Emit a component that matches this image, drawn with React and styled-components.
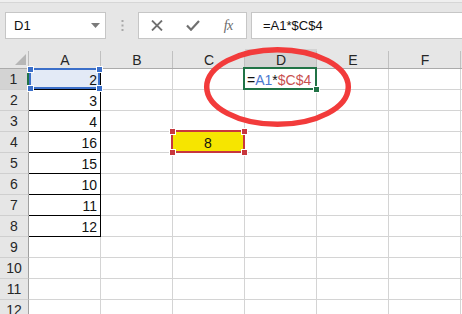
import React from "react";
import styled, { createGlobalStyle } from "styled-components";

const GlobalStyle = createGlobalStyle`
  html, body { margin: 0; padding: 0; background: #fff; }
  body { font-family: "Liberation Sans", Arial, sans-serif; }
`;

const Wrap = styled.div`
  position: relative;
  width: 462px;
  height: 314px;
  overflow: hidden;
  background: #fff;
`;

const FormulaBar = styled.div`
  display: flex;
  align-items: flex-start;
  height: 49px;
  box-sizing: border-box;
  padding: 12px 0 0 5px;
  background: linear-gradient(#efefef 0 2px, #d6d6d6 2px 3px, #e6e6e6 3px);
`;

const NameBox = styled.div`
  width: 101px;
  height: 27px;
  box-sizing: border-box;
  display: flex;
  align-items: center;
  justify-content: space-between;
  padding: 0 5px 0 8px;
  background: #fff;
  border: 1px solid #c6c6c6;
  font-size: 13px;
  color: #111;
`;

const Grip = styled.div`
  width: 32px;
  height: 27px;
  display: flex;
  align-items: center;
  justify-content: center;
`;

const FnBox = styled.div`
  width: 109px;
  height: 27px;
  box-sizing: border-box;
  display: flex;
  background: #fff;
  border: 1px solid #c6c6c6;
`;

const FnButton = styled.div`
  width: 36px;
  display: flex;
  align-items: center;
  justify-content: center;
  color: #707070;
`;

const Fx = styled.span`
  font-family: "Liberation Serif", "Times New Roman", serif;
  font-style: italic;
  font-size: 14px;
  color: #6a6a6a;
  letter-spacing: -0.5px;
`;

const FormulaInput = styled.div`
  flex: 1;
  height: 27px;
  margin-left: 4px;
  box-sizing: border-box;
  display: flex;
  align-items: center;
  padding-left: 11px;
  background: #fff;
  border: 1px solid #c6c6c6;
  border-right: none;
  font-size: 13px;
  color: #111;
`;

const Sheet = styled.div`
  display: grid;
  grid-template-columns: 29px repeat(6, 72px) 1fr;
  grid-template-rows: 20px repeat(12, 21px);
  font-size: 14px;
  color: #111;
`;

const Corner = styled.div`
  background: #e6e6e6;
  border-bottom: 1px solid #ababab;
  display: flex;
  align-items: flex-end;
  justify-content: flex-end;
  padding: 0 3px 3px 0;
  box-sizing: border-box;
  position: relative;
  &::after {
    content: "";
    position: absolute;
    right: 0;
    top: 2px;
    bottom: 0;
    width: 1px;
    background: #bcbcbc;
  }
`;

const ColHead = styled.div`
  position: relative;
  display: flex;
  align-items: center;
  justify-content: center;
  box-sizing: border-box;
  padding-top: 2px;
  background: ${(p) => (p.$active ? "#d3d3d3" : "#e6e6e6")};
  border-bottom: 1px solid ${(p) => (p.$active ? "#217346" : "#ababab")};
  color: #262626;
  &::after {
    content: "";
    position: absolute;
    right: 0;
    top: 2px;
    bottom: 0;
    width: 1px;
    background: #c0c0c0;
  }
`;

const RowHead = styled.div`
  display: flex;
  align-items: center;
  justify-content: center;
  box-sizing: border-box;
  background: ${(p) => (p.$active ? "#d3d3d3" : "#e6e6e6")};
  border-right: ${(p) => (p.$active ? "2px solid #217346" : "1px solid #a0a0a0")};
  border-bottom: 1px solid #cfcfcf;
  color: #262626;
`;

const Cell = styled.div`
  position: relative;
  display: flex;
  align-items: center;
  justify-content: ${(p) => p.$align || "flex-start"};
  box-sizing: border-box;
  padding: 1px 3px 0 2px;
  white-space: nowrap;
  background: ${(p) => p.$fill || "#fff"};
  border-right: 1px solid ${(p) => (p.$boxed ? "#000" : "#d4d4d4")};
  border-bottom: 1px solid ${(p) => (p.$boxed ? "#000" : "#d4d4d4")};
`;

const Sel = styled.div`
  position: absolute;
  top: ${(p) => p.$t}px;
  left: ${(p) => p.$l}px;
  right: ${(p) => p.$r}px;
  bottom: ${(p) => p.$b}px;
  border: 2px solid ${(p) => p.$color};
  z-index: 2;
  pointer-events: none;
`;

const Handle = styled.span`
  position: absolute;
  width: 5px;
  height: 5px;
  background: ${(p) => p.$color};
  outline: 1px solid #fff;
  ${(p) => (p.$y === "top" ? "top: -3.5px;" : "bottom: -3.5px;")}
  ${(p) => (p.$x === "left" ? "left: -3.5px;" : "right: -3.5px;")}
`;

const Ref = styled.span`
  color: ${(p) => p.$color || "#111"};
`;

const Ring = styled.svg`
  position: absolute;
  left: 0;
  top: 0;
  z-index: 5;
  pointer-events: none;
`;

const cols = ["A", "B", "C", "D", "E", "F"];
const valuesA = [2, 3, 4, 16, 15, 10, 11, 12];

function Corners({ color, only }) {
  const spots = only || [
    ["top", "left"],
    ["top", "right"],
    ["bottom", "left"],
    ["bottom", "right"],
  ];
  return spots.map(([y, x]) => <Handle key={y + x} $y={y} $x={x} $color={color} />);
}

function renderCell(row, col) {
  if (col === 0 && row <= 8) {
    return (
      <Cell key={col} $boxed $align="flex-end" $fill={row === 1 ? "#e3eaf6" : undefined}>
        {valuesA[row - 1]}
        {row === 1 && (
          <Sel $t={-1} $l={0} $r={0} $b={0} $color="#3b6fc9">
            <Corners color="#3b6fc9" />
          </Sel>
        )}
      </Cell>
    );
  }
  if (col === 2 && row === 4) {
    return (
      <Cell key={col} $align="center" $fill="#f6e500">
        8
        <Sel $t={-2} $l={-2} $r={-1} $b={-1} $color="#c8373d">
          <Corners color="#c8373d" />
        </Sel>
      </Cell>
    );
  }
  if (col === 3 && row === 1) {
    return (
      <Cell key={col}>
        <Ref>=</Ref>
        <Ref $color="#4a78cf">A1</Ref>
        <Ref>*</Ref>
        <Ref $color="#c9504f">$C$4</Ref>
        <Sel $t={-2} $l={-2} $r={-1} $b={-1} $color="#217346">
          <Corners color="#217346" only={[["bottom", "right"]]} />
        </Sel>
      </Cell>
    );
  }
  return <Cell key={col} />;
}

export default function App() {
  const rows = Array.from({ length: 12 }, (_, i) => i + 1);
  return (
    <Wrap>
      <GlobalStyle />
      <FormulaBar>
        <NameBox>
          D1
          <svg width="9" height="5" viewBox="0 0 9 5">
            <path d="M0 0h9L4.5 5z" fill="#7a7a7a" />
          </svg>
        </NameBox>
        <Grip>
          <svg width="3" height="11" viewBox="0 0 3 11">
            <rect x="0.5" y="0" width="2" height="2" fill="#a8a8a8" />
            <rect x="0.5" y="4.5" width="2" height="2" fill="#a8a8a8" />
            <rect x="0.5" y="9" width="2" height="2" fill="#a8a8a8" />
          </svg>
        </Grip>
        <FnBox>
          <FnButton>
            <svg width="12" height="11" viewBox="0 0 12 11">
              <path d="M1 0.5l10 10M11 0.5l-10 10" stroke="#707070" strokeWidth="1.8" />
            </svg>
          </FnButton>
          <FnButton>
            <svg width="14" height="11" viewBox="0 0 14 11">
              <path d="M1 5.5l4 4.2L13 1" stroke="#707070" strokeWidth="2.2" fill="none" />
            </svg>
          </FnButton>
          <FnButton>
            <Fx>fx</Fx>
          </FnButton>
        </FnBox>
        <FormulaInput>=A1*$C$4</FormulaInput>
      </FormulaBar>
      <Sheet>
        <Corner>
          <svg width="11" height="11" viewBox="0 0 11 11">
            <path d="M11 0V11H0z" fill="#b6b6b6" />
          </svg>
        </Corner>
        {cols.map((c) => (
          <ColHead key={c} $active={c === "D"}>
            {c}
          </ColHead>
        ))}
        <ColHead />
        {rows.map((r) => (
          <React.Fragment key={r}>
            <RowHead $active={r === 1}>{r}</RowHead>
            {cols.map((_, ci) => renderCell(r, ci))}
            <Cell />
          </React.Fragment>
        ))}
      </Sheet>
      <Ring width="462" height="314">
        <ellipse cx="277.5" cy="87" rx="70.8" ry="37.3" fill="none" stroke="#f23b3b" strokeWidth="5.5" />
      </Ring>
    </Wrap>
  );
}
